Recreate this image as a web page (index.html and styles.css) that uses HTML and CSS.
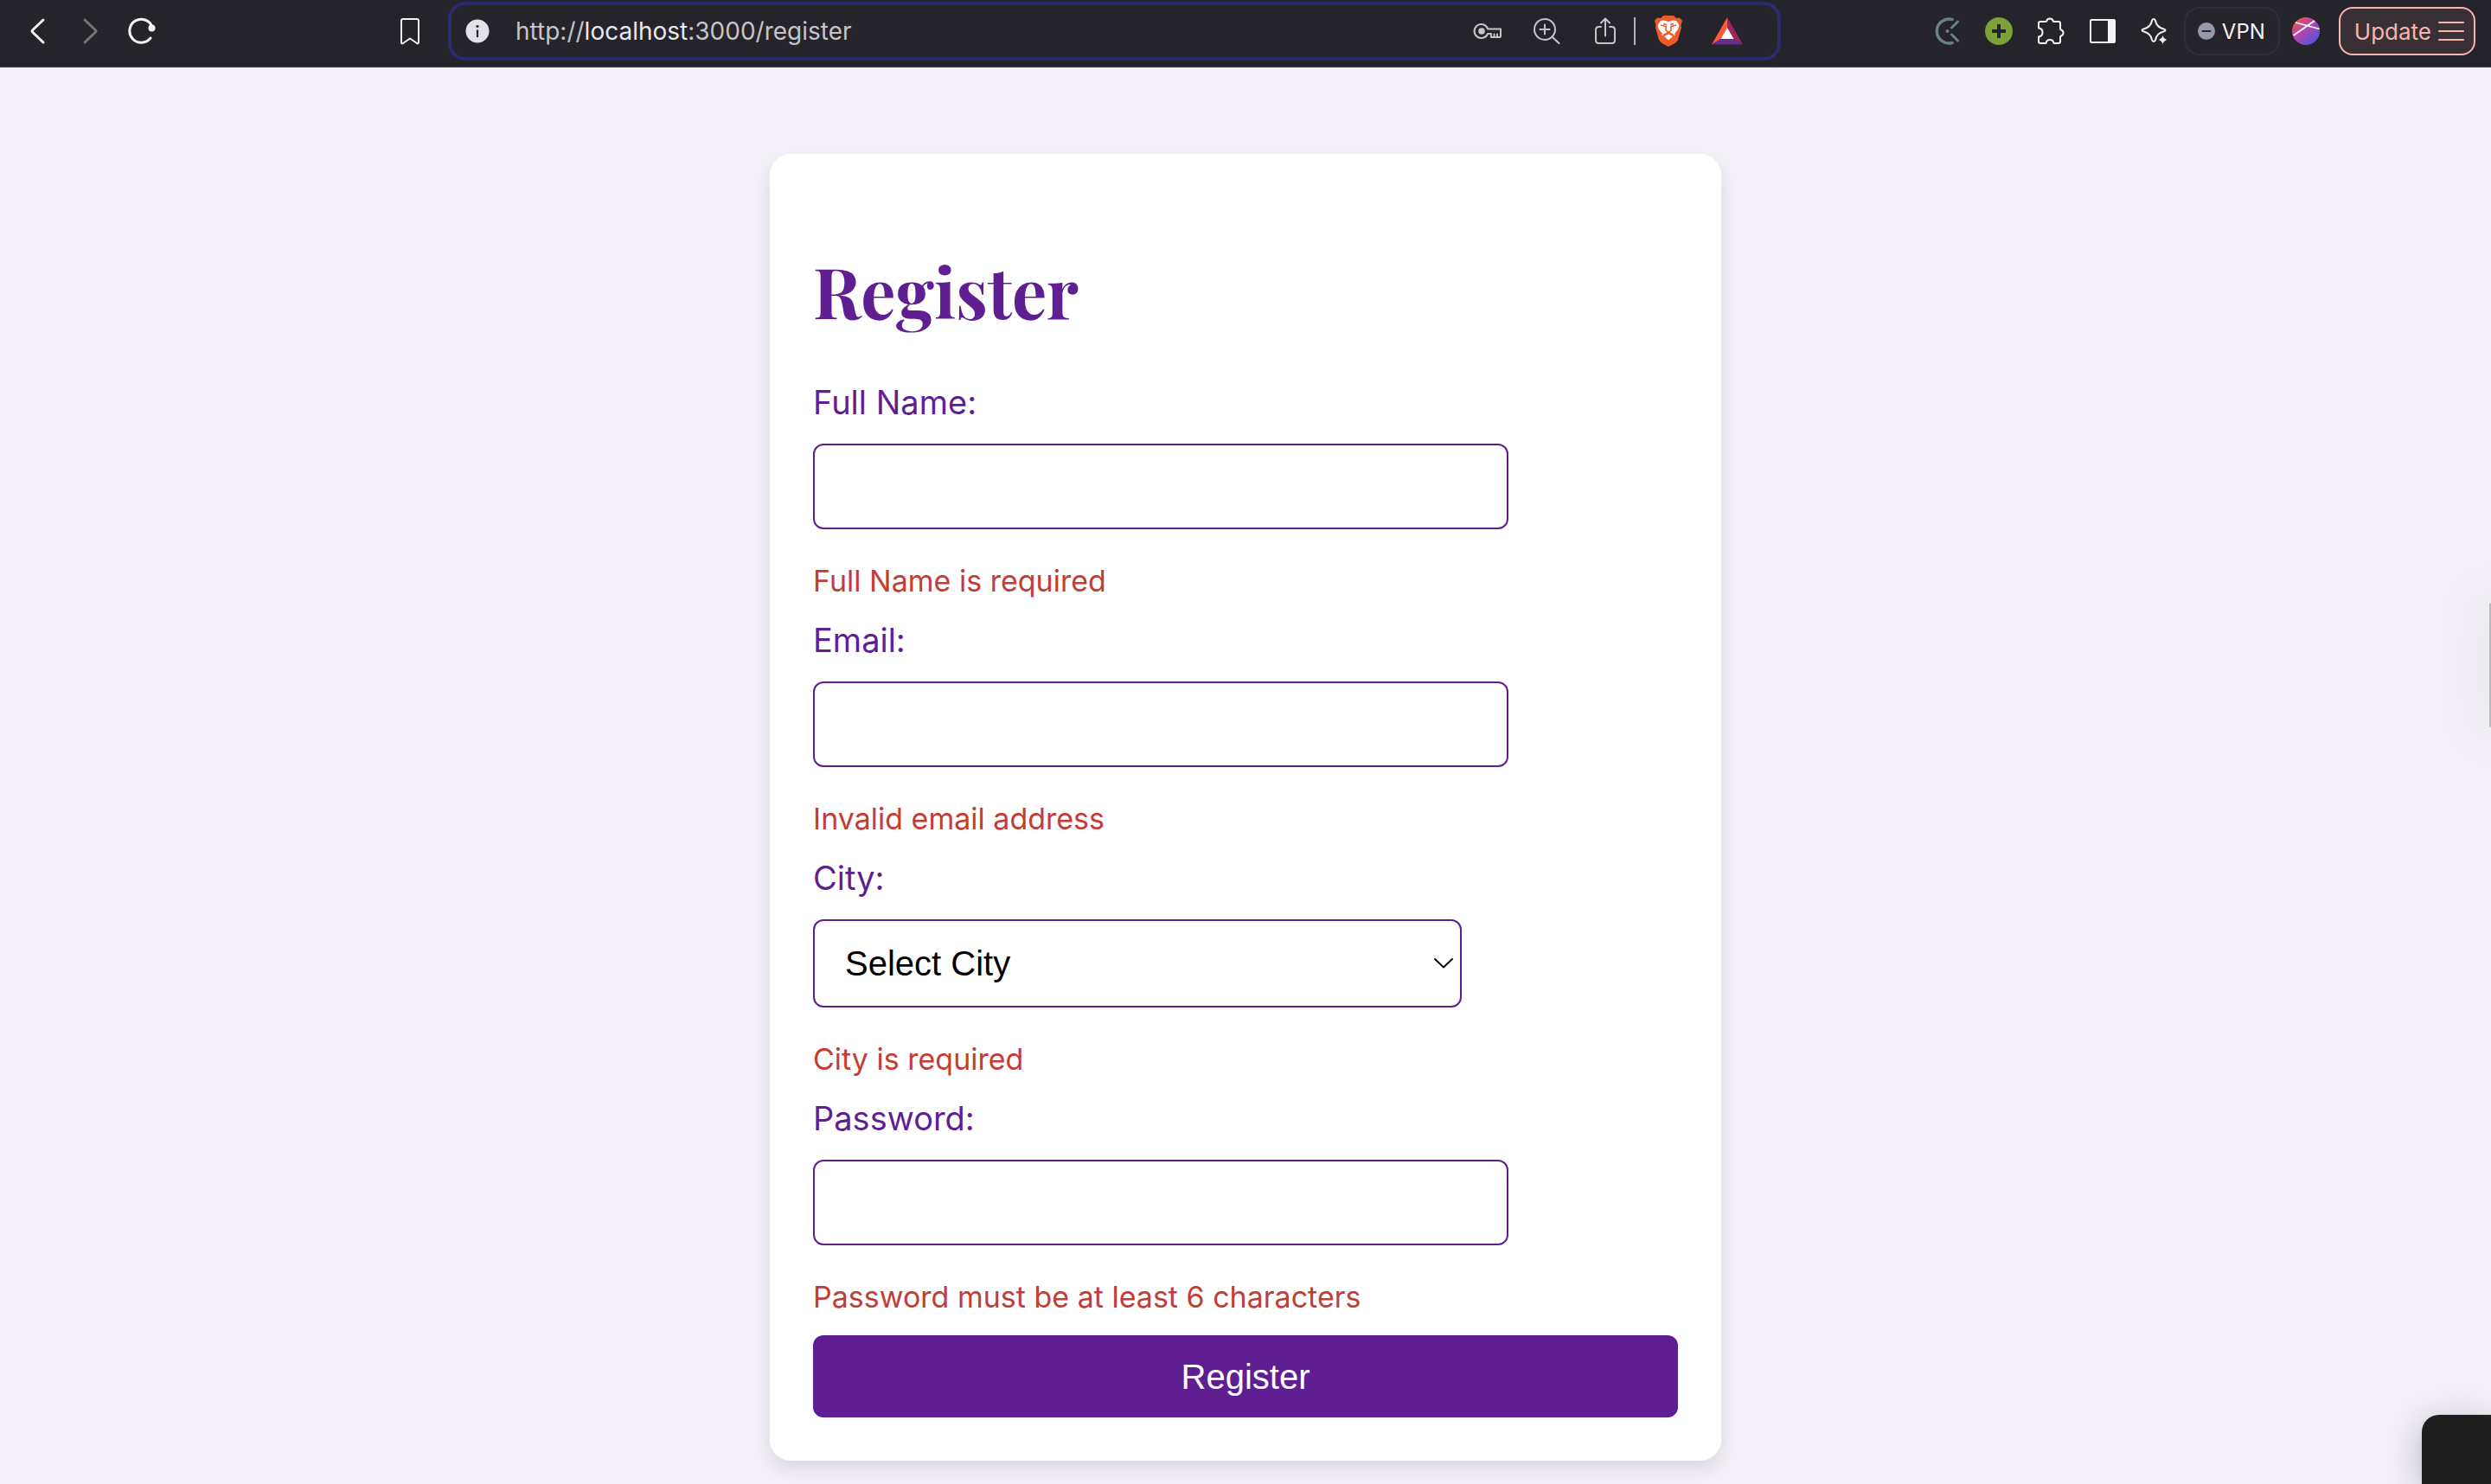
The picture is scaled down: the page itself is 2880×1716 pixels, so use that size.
FILE: index.html
```html
<!DOCTYPE html>
<html lang="en">
<head>
<meta charset="utf-8">
<meta name="viewport" content="width=device-width, initial-scale=1">
<title>Register</title>
<link rel="stylesheet" href="styles.css">
</head>
<body>
<header class="toolbar">
  <nav class="nav" aria-label="History">
    <button class="icon-btn" type="button" aria-label="Back"><svg width="32" height="32" viewBox="0 0 32 32"><path d="M22 3 9.500 15Q8.500 16 9.500 17L22 29" class="line w3"/></svg></button>
    <button class="icon-btn dim" type="button" aria-label="Forward"><svg width="32" height="32" viewBox="0 0 32 32"><path d="M10 3 22.500 15Q23.500 16 22.500 17L10 29" class="line w3"/></svg></button>
    <button class="icon-btn" type="button" aria-label="Reload"><svg width="32" height="32" viewBox="0 0 32 32"><path d="M26 24A13.500 13.500 0 1 1 28 11" class="line w3"/><circle cx="27.500" cy="12.500" r="4" fill="currentColor"/></svg></button>
  </nav>
  <button class="icon-btn" type="button" aria-label="Bookmark"><svg width="32" height="32" viewBox="0 0 32 32"><path d="M8 2H24Q26 2 26 4V29Q26 31 24 30L16 24.500 8 30Q6 31 6 29V4Q6 2 8 2Z" class="line w2"/></svg></button>
  <div class="address">
    <svg class="info" width="28" height="28" viewBox="0 0 28 28"><circle cx="14" cy="14" r="13.500" fill="#e3e1e8"/><circle cx="14" cy="8.500" r="1.600" fill="#25242a"/><path d="M14 12.500V21" stroke="#25242a" stroke-width="2.200"/></svg>
    <div class="url" role="textbox" aria-label="Address">http://<span class="host">localhost</span>:3000/register</div>
    <svg class="key" width="34" height="34" viewBox="0 0 34 34"><path d="M17 14A8 8 0 1 0 17 20H21V24H31Q32 24 32 23V14.500H17" class="line w2"/><circle cx="10" cy="17" r="3.800" fill="currentColor"/><path d="M24.500 24V20.500M28 24V20.500" class="line w2"/></svg>
    <svg class="find" width="34" height="34" viewBox="0 0 34 34"><circle cx="15" cy="15" r="12" class="line w2"/><path d="M15 9.500V20.500M9.500 15H20.500M24 24 31.500 31" class="line w2"/></svg>
    <svg class="share" width="34" height="34" viewBox="0 0 34 34"><path d="M12 12H9.500Q6 12 6 15.500V27.500Q6 31 9.500 31H24.500Q28 31 28 27.500V15.500Q28 12 24.500 12H22M17 22.500V3M12 7.500 17 2.500 22 7.500" class="line w2"/></svg>
    <span class="divider"></span>
    <svg class="shield" width="32" height="36" viewBox="0 0 32 36"><path d="M10 0H22L25 3 29 2.500 32 6 30.500 11 31 14 27 28Q26 30.500 23.500 32L16 36 8.500 32Q6 30.500 5 28L1 14 1.500 11 0 6 3 2.500 7 3Z" fill="#ee5a29"/><path d="M10.500 5.500 16 7 21.500 5.500 25 6 28.500 11 27 16 23 21 24 23 20 22 17.500 20.500 16 20 14.500 20.500 12 22 8 23 9 21 5 16 3.500 11 7 6Z" fill="#fff"/><path d="M7 11 13 12.500V17L16 19.500 19 17V12.500L25 11M10 9.500 14 10.500M22 9.500 18 10.500M16 19V22M10 22.500 16 19.500 22 22.500" fill="none" stroke="#ee5a29" stroke-width="1.600"/><path d="M11 24 16 21.500 21 24 16 28.500Z" fill="#fff"/></svg>
    <svg class="bat" width="36" height="32" viewBox="0 0 36 32"><path d="M18 0 0 31.500 10.500 25 18 12Z" fill="#fb5b35"/><path d="M18 0 36 31.500 25.500 25 18 12Z" fill="#9a2560"/><path d="M0 31.500H36L25.500 25H10.500Z" fill="#652d91"/><path d="M18 12 10.500 25H25.500Z" fill="#fff"/></svg>
  </div>
  <div class="extensions">
    <button class="icon-btn" type="button" aria-label="Time tracker"><svg width="32" height="34" viewBox="0 0 32 34"><g fill="none" stroke="#6c8089" stroke-linecap="round"><path d="M22 3.500A14 14 0 1 0 22 30.500" stroke-width="3.500"/><path d="M21.500 13 28.500 6M21.500 21 28.500 28" stroke-width="3"/></g><circle cx="16.500" cy="17" r="2" fill="#6c8089"/></svg></button>
    <button class="icon-btn" type="button" aria-label="Add"><svg width="32" height="32" viewBox="0 0 32 32"><circle cx="16" cy="16" r="16" fill="#7f9f37"/><path d="M16 8V24M8 16H24" stroke="#25242a" stroke-width="4"/></svg></button>
    <button class="icon-btn" type="button" aria-label="Extensions"><svg width="32" height="32" viewBox="0 0 32 32"><path d="M4 5H10Q11 5 11.500 4Q12 1.500 15 1.500T18.500 4Q19 5 20 5H25Q27 5 27 7V13Q27 14 28 14.500Q30.500 15.500 30.500 18T28 21.500Q27 22 27 23V28Q27 30 25 30H19.500Q19 26 15 26T10.500 30H4Q2 30 2 28V22.500Q6.500 22 6.500 17.500T2 12.500V7Q2 5 4 5Z" class="line w2"/></svg></button>
    <button class="icon-btn" type="button" aria-label="Sidebar"><svg width="32" height="32" viewBox="0 0 32 32"><rect x="2" y="3" width="28" height="26" rx="1" class="line w2"/><path d="M22 3H30V29H22Z" fill="currentColor"/></svg></button>
    <button class="icon-btn" type="button" aria-label="Assistant"><svg width="32" height="32" viewBox="0 0 32 32"><path d="M15 2Q16.500 2 17 4Q18.500 11.500 26.500 13.500Q28.500 14 28.500 15T26.500 16.500Q18.500 18.500 17 26Q16.500 28 15 28T13 26Q11.500 18.500 3.500 16.500Q1.500 16 1.500 15T3.500 13.500Q11.500 11.500 13 4Q13.500 2 15 2Z" class="line w2"/><path d="M25.500 20.500 27.500 24 31 26 27.500 28 25.500 31.500 23.500 28 20 26 23.500 24Z" fill="currentColor" stroke="#25242a" stroke-width="1"/></svg></button>
  </div>
  <button class="vpn" type="button"><svg width="20" height="20" viewBox="0 0 20 20"><circle cx="10" cy="10" r="10" fill="#9799ab"/><path d="M5.500 10H14.500" stroke="#25242a" stroke-width="2" stroke-linecap="round"/></svg>VPN</button>
  <button class="icon-btn" type="button" aria-label="Profile"><svg width="32" height="32" viewBox="0 0 32 32"><defs><linearGradient id="orb" x1="0" y1="0" x2="1" y2="1"><stop offset=".1" stop-color="#e8554f"/><stop offset=".45" stop-color="#b544b0"/><stop offset=".9" stop-color="#4a57dd"/></linearGradient></defs><circle cx="16" cy="16" r="16" fill="url(#orb)"/><path d="M4 6 31.500 13.500M1.500 21 26 4" stroke="#fff" stroke-width="1.800"/></svg></button>
  <button class="update" type="button">Update<svg width="30" height="24" viewBox="0 0 30 24"><path d="M1 2H29M1 12H29M1 22H29" class="line w2"/></svg></button>
</header>

<main class="page">
  <form class="card" novalidate>
    <h1 class="title">Register</h1>
    <div class="field">
      <label class="label" for="name">Full Name:</label>
      <input class="control" id="name" type="text" aria-describedby="name-error">
      <p class="error" id="name-error">Full Name is required</p>
    </div>
    <div class="field">
      <label class="label" for="email">Email:</label>
      <input class="control" id="email" type="email" aria-describedby="email-error">
      <p class="error" id="email-error">Invalid email address</p>
    </div>
    <div class="field">
      <label class="label" for="city">City:</label>
      <div class="select-wrap">
        <select class="control select" id="city" aria-describedby="city-error"><option>Select City</option></select>
        <svg class="chevron" width="24" height="14" viewBox="0 0 24 14"><path d="M2 2 12 11.500 22 2" class="line w2"/></svg>
      </div>
      <p class="error" id="city-error">City is required</p>
    </div>
    <div class="field">
      <label class="label" for="password">Password:</label>
      <input class="control" id="password" type="password" aria-describedby="password-error">
      <p class="error" id="password-error">Password must be at least 6 characters</p>
    </div>
    <button class="submit" type="submit">Register</button>
  </form>
</main>
<div class="edge-tab"></div>
<div class="corner-panel"></div>
</body>
</html>
```
FILE: styles.css
```css
* { box-sizing: border-box; }

body {
  margin: 0;
  min-height: 100vh;
  background: #f3f0f7;
  font-family: Inter, "Noto Sans", sans-serif;
  overflow-x: hidden;
}

button {
  font: inherit;
  margin: 0;
  padding: 0;
  border: 0;
  background: none;
  color: inherit;
}

svg { display: block; flex: none; }

.line {
  fill: none;
  stroke: currentColor;
  stroke-linecap: round;
  stroke-linejoin: round;
}
.w2 { stroke-width: 2; }
.w3 { stroke-width: 3; }

/* Browser toolbar */
.toolbar {
  display: flex;
  align-items: center;
  height: 78px;
  padding: 0 18px 4px 14px;
  background: #25242a;
  border-bottom: 2px solid #332f36;
  color: #f3f2f6;
}

.nav { display: flex; margin-right: 250px; }

.icon-btn {
  display: grid;
  place-items: center;
  width: 60px;
  height: 56px;
}
.dim { color: #77757c; }

.address {
  display: flex;
  flex: 1;
  align-items: center;
  min-width: 0;
  height: 68px;
  margin: 0 162px 0 14px;
  padding: 0 40px 0 16px;
  border: 4px solid #2d2b70;
  border-radius: 20px;
  color: #c6c4cb;
}
.url {
  flex: 1;
  margin-left: 30px;
  font-size: 28px;
  line-height: 34px;
  white-space: nowrap;
}
.host { color: #e9e7ee; }
.find, .share { margin-left: 34px; }
.divider {
  width: 2px;
  height: 32px;
  margin: 0 22px 0 16px;
  background: #b4b2b9;
}
.bat { margin-left: 34px; }

.extensions { display: flex; }

.vpn {
  display: flex;
  align-items: center;
  gap: 8px;
  height: 56px;
  margin-left: 4px;
  padding: 0 15px 0 14px;
  border: 2px solid #302e35;
  border-radius: 18px;
  font-size: 24px;
}

.update {
  display: flex;
  align-items: center;
  gap: 8px;
  height: 56px;
  margin-left: 8px;
  padding: 0 11px 0 16px;
  border: 2px solid #f7b5b0;
  border-radius: 16px;
  background: #383034;
  color: #f7b5b0;
  font-size: 26px;
}

/* Registration form */
.page {
  display: flex;
  justify-content: center;
  padding: 100px 24px 26px;
}

.card {
  width: 100%;
  max-width: 1100px;
  padding: 50px;
  border-radius: 24px;
  background: #fff;
  box-shadow: 0 10px 20px rgba(0, 0, 0, 0.1);
}

.title {
  margin: 60px 0 57px;
  color: #5f1f93;
  font: bold 80px/96px "Playfair Display", "Liberation Serif", serif;
}

.field { margin-bottom: 22px; }

.label {
  display: block;
  margin-bottom: 24px;
  color: #5f1f93;
  font-size: 38px;
  line-height: 48px;
}

.control {
  display: block;
  width: 100%;
  max-width: 804px;
  height: 99px;
  padding: 0 35px;
  border: 2px solid #5f1f93;
  border-radius: 12px;
  background: #fff;
  color: #000;
  font: 40px/48px "Liberation Sans", Arial, sans-serif;
}

.select-wrap {
  display: grid;
  align-items: center;
  max-width: 750px;
}
.select {
  grid-area: 1 / 1;
  height: 102px;
  appearance: none;
}
.chevron {
  grid-area: 1 / 1;
  justify-self: end;
  margin-right: 9px;
  color: #000;
  pointer-events: none;
}

.error {
  margin: 38px 0 0;
  color: #c33d35;
  font-size: 34px;
  line-height: 44px;
}

.submit {
  display: block;
  width: 100%;
  height: 95px;
  border-radius: 12px;
  background: #5f1f93;
  color: #fff;
  font: 40px/48px "Liberation Sans", Arial, sans-serif;
}

/* Floating overlays at the window edge */
.edge-tab {
  position: fixed;
  top: 697px;
  right: 0;
  width: 2px;
  height: 144px;
  border-radius: 2px 0 0 2px;
  background: #b9b9bc;
  box-shadow: 0 0 60px 20px rgba(0, 0, 0, 0.04);
}
.corner-panel {
  position: fixed;
  right: 0;
  bottom: 0;
  width: 80px;
  height: 80px;
  border-radius: 20px 0 0 0;
  background: #1f1f1f;
  box-shadow: 0 8px 40px rgba(0, 0, 30, 0.25);
}
```
